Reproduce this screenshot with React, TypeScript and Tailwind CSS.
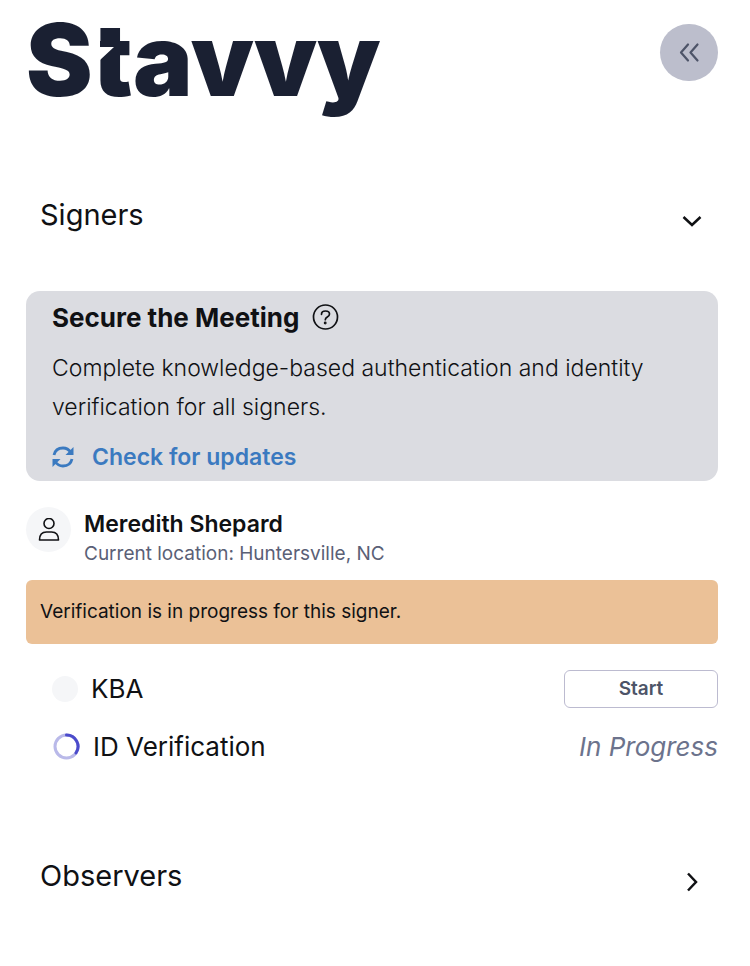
import React from 'react';

function Wordmark() {
  return (
    <div className="relative font-['Inter',sans-serif] text-[100px] leading-[72px] font-black text-[#1a2032]">
      Stavvy
      {/* Slanted notch on the left side of the "t" */}
      <svg className="absolute top-4 left-[66px] h-6 w-6" viewBox="0 0 24 24" aria-hidden="true">
        <path d="M0 0H8V7H22L8 20V23H0z" fill="#fff" />
      </svg>
    </div>
  );
}

function Chevron({ className = '' }: { className?: string }) {
  return (
    <svg className={`h-6 w-6 ${className}`} viewBox="0 0 24 24" fill="none" stroke="#101114" strokeWidth="2.5" aria-hidden="true">
      <path d="M3.500 8 12 16 20.500 8" />
    </svg>
  );
}

function SectionHeader({ title, open }: { title: string; open: boolean }) {
  return (
    <h2>
      <button type="button" aria-expanded={open} className="flex w-full items-center justify-between px-[14px] text-left text-[29px] leading-[40px]">
        <span>{title}</span>
        <span className="pt-3">
          <Chevron className={open ? '' : '-rotate-90'} />
        </span>
      </button>
    </h2>
  );
}

export default function App() {
  return (
    <main className="min-h-screen bg-white pt-6 pr-8 pb-12 pl-[26px] font-['Inter','Liberation_Sans',sans-serif] text-[#101114]">
      <header className="flex items-start justify-between">
        <Wordmark />
        <button type="button" aria-label="Collapse panel" className="flex h-[57px] w-[58px] items-center justify-center rounded-full bg-[#bcbecc]">
          <svg className="h-6 w-6" viewBox="0 0 24 24" fill="none" stroke="#4d5468" strokeWidth="2.200" strokeLinecap="round" strokeLinejoin="round" aria-hidden="true">
            <path d="M11 3.500 4 11.500 11 19.500M20.500 3.500 13.500 11.500 20.500 19.500" />
          </svg>
        </button>
      </header>

      <section className="mt-[99px]">
        <SectionHeader title="Signers" open />

        <div className="mt-14 rounded-[14px] bg-[#dbdce1] px-[26px] pt-[9px] pb-1">
          <div className="flex items-center gap-3">
            <h3 className="text-[26px] leading-9 font-bold">Secure the Meeting</h3>
            <button type="button" aria-label="About securing the meeting">
              <svg className="h-7 w-7" viewBox="0 0 28 28" fill="none" stroke="#101114" strokeWidth="1.7" strokeLinecap="round" strokeLinejoin="round" aria-hidden="true">
                <circle cx="14.500" cy="13" r="12" />
                <path d="M10.500 10.300C10.500 8.100 12.200 7 14.500 7s4 1.200 4 3.100c0 3.200-4.200 2.700-4.200 5.600" />
                <circle cx="14.200" cy="19" r=".6" fill="#101114" />
              </svg>
            </button>
          </div>
          <p className="mt-[13px] text-[23px] leading-[39px] font-light">
            Complete knowledge-based authentication and identity verification for all signers.
          </p>
          <button type="button" className="mt-3 mb-[2px] flex items-center gap-[18px] text-[23px] leading-9 font-semibold text-[#3b7ac0]">
            <svg className="h-[22px] w-[22px]" viewBox="0 0 22 22" fill="none" stroke="currentColor" strokeWidth="2.800" aria-hidden="true">
              <path d="M2 9C3 4.500 6.500 2 11 2c3.500 0 6 1.500 8 4.500" />
              <path d="M20 13c-1 4.500-4.500 7-9 7-3.500 0-6-1.500-8-4.500" />
              <path d="M21.500 1v8h-8zM.5 21v-8h8z" fill="currentColor" stroke="none" />
            </svg>
            Check for updates
          </button>
        </div>

        <div className="mt-[26px] flex items-start gap-[13px]">
          <span className="flex h-[45px] w-[45px] items-center justify-center rounded-full bg-[#f5f6f8]">
            <svg className="h-6 w-6" viewBox="0 0 24 24" fill="none" stroke="#101114" strokeWidth="1.600" strokeLinejoin="round" aria-hidden="true">
              <circle cx="12" cy="5.500" r="5" />
              <path d="M2.500 22c0-5.500 2.500-8 7-8h5c4.500 0 7 2.500 7 8z" />
            </svg>
          </span>
          <div>
            <h3 className="text-[23px] leading-[34px] font-semibold">Meredith Shepard</h3>
            <p className="text-[19px] leading-[26px] text-[#5a6076]">Current location: Huntersville, NC</p>
          </div>
        </div>

        <p role="status" className="mt-[13px] rounded-md bg-[#ebc197] px-[14px] text-[19px] leading-[64px]">
          Verification is in progress for this signer.
        </p>

        <ul className="mt-[26px]">
          <li className="flex items-center justify-between pl-[26px]">
            <span className="flex items-center gap-[13px] text-[26px] leading-[38px]">
              <span className="h-[26px] w-[26px] rounded-full bg-[#f5f6f8]" />
              KBA
            </span>
            <button type="button" className="h-[38px] w-[154px] rounded-md border border-[#bcbbd0] text-[19px] font-semibold text-[#4d5468]">
              Start
            </button>
          </li>
          <li className="mt-5 flex items-center justify-between pl-[26px]">
            <span className="flex items-center gap-[13px] text-[26px] leading-[38px]">
              <svg className="h-7 w-7" viewBox="0 0 28 28" fill="none" strokeWidth="3" aria-hidden="true">
                <circle cx="14.500" cy="13.500" r="11.500" stroke="#b9b9e9" />
                <path d="M14.500 2a11.500 11.500 0 0 1 9.500 18" stroke="#4b4bcb" strokeLinecap="round" />
              </svg>
              ID Verification
            </span>
            <em className="text-[26px] leading-[38px] text-[#6c738c]">In Progress</em>
          </li>
        </ul>
      </section>

      <section className="mt-[90px]">
        <SectionHeader title="Observers" open={false} />
      </section>
    </main>
  );
}
